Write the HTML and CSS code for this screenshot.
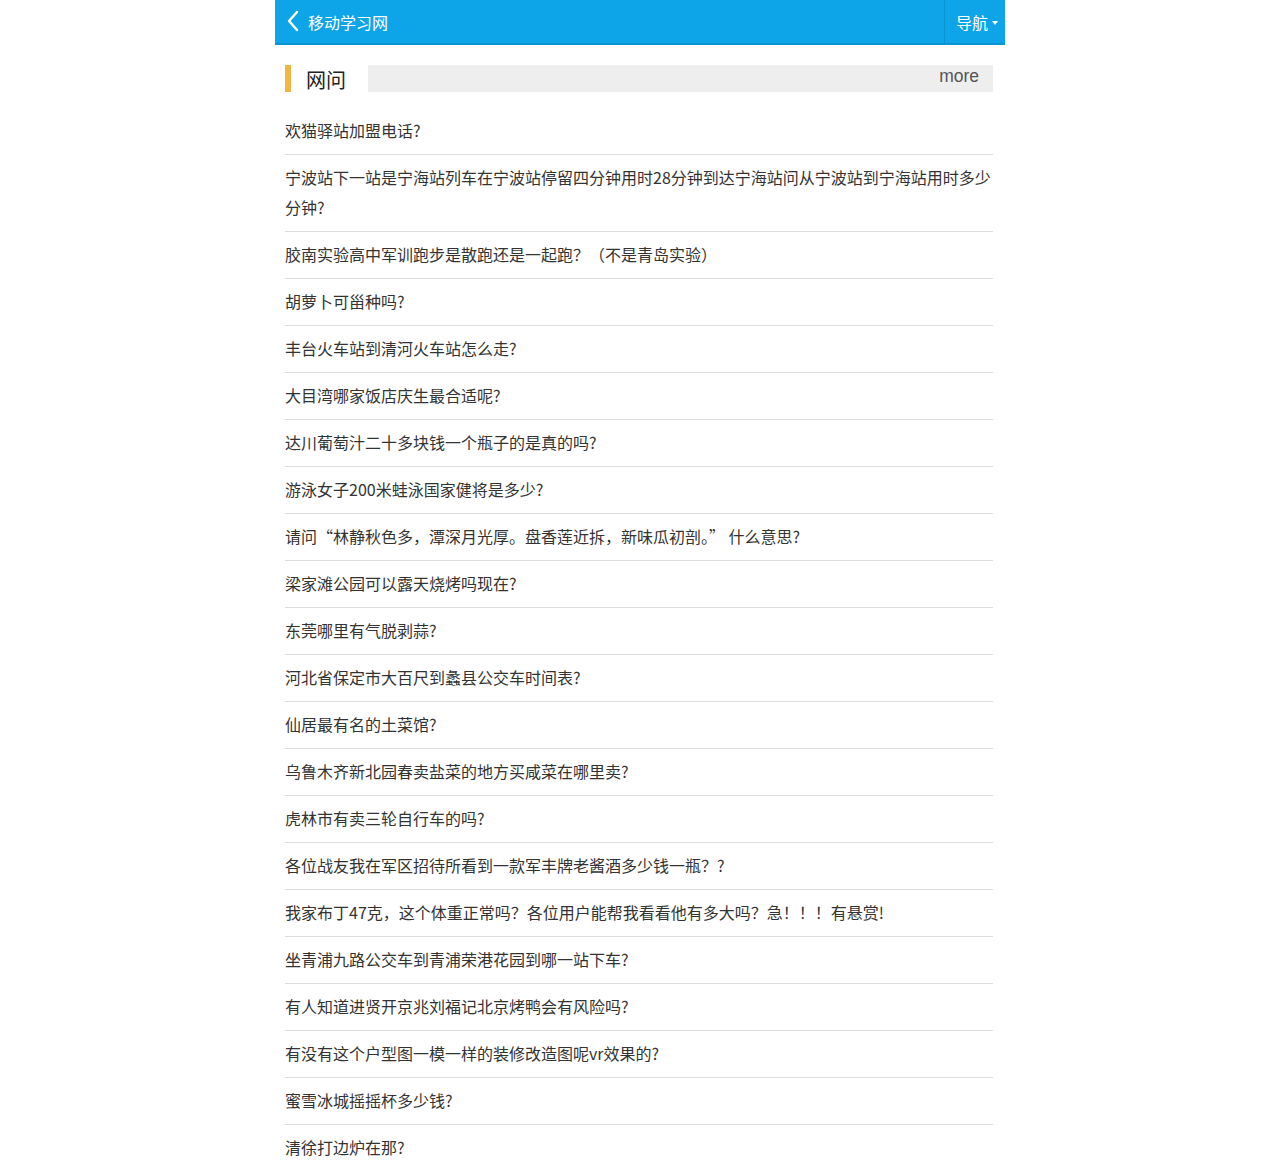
FILE: index.html
```html
<!DOCTYPE html>
<html lang="zh-CN">
<head>
<meta charset="utf-8">
<title>移动学习网</title>
<link rel="stylesheet" href="styles.css">
</head>
<body>
<div class="page">
  <header class="topbar">
    <a class="back" href="#">
      <svg class="back-icon" width="14" height="22" viewBox="0 0 14 22"><path d="M11 2 L3 11 L11 20" fill="none" stroke="#fff" stroke-width="2.4" stroke-linecap="round" stroke-linejoin="round"/></svg>
      <span class="site">移动学习网</span>
    </a>
    <div class="nav">导航<span class="caret"></span></div>
  </header>
  <section class="section">
    <div class="sec-head">
      <span class="sec-mark"></span>
      <h2 class="sec-title">网问</h2>
      <div class="sec-bar"><a class="more" href="#">more</a></div>
    </div>
    <ul class="list">
      <li>欢猫驿站加盟电话?</li>
      <li>宁波站下一站是宁海站列车在宁波站停留四分钟用时28分钟到达宁海站问从宁波站到宁海站用时多少分钟?</li>
      <li>胶南实验高中军训跑步是散跑还是一起跑？（不是青岛实验）</li>
      <li>胡萝卜可甾种吗?</li>
      <li>丰台火车站到清河火车站怎么走?</li>
      <li>大目湾哪家饭店庆生最合适呢?</li>
      <li>达川葡萄汁二十多块钱一个瓶子的是真的吗?</li>
      <li>游泳女子200米蛙泳国家健将是多少?</li>
      <li>请问“林静秋色多，潭深月光厚。盘香莲近拆，新味瓜初剖。” 什么意思?</li>
      <li>梁家滩公园可以露天烧烤吗现在?</li>
      <li>东莞哪里有气脱剥蒜?</li>
      <li>河北省保定市大百尺到蠡县公交车时间表?</li>
      <li>仙居最有名的土菜馆?</li>
      <li>乌鲁木齐新北园春卖盐菜的地方买咸菜在哪里卖?</li>
      <li>虎林市有卖三轮自行车的吗?</li>
      <li>各位战友我在军区招待所看到一款军丰牌老酱酒多少钱一瓶？?</li>
      <li>我家布丁47克，这个体重正常吗？各位用户能帮我看看他有多大吗？急！！！有悬赏!</li>
      <li>坐青浦九路公交车到青浦荣港花园到哪一站下车?</li>
      <li>有人知道进贤开京兆刘福记北京烤鸭会有风险吗?</li>
      <li>有没有这个户型图一模一样的装修改造图呢vr效果的?</li>
      <li>蜜雪冰城摇摇杯多少钱?</li>
      <li>清徐打边炉在那?</li>
    </ul>
  </section>
</div>
</body>
</html>
```

FILE: styles.css
```css
* { box-sizing: border-box; }
html, body { margin: 0; padding: 0; background: #fff; }
body {
  font-family: "Noto Sans CJK SC", "Microsoft YaHei", "Liberation Sans", sans-serif;
  color: #333;
  font-size: 16px;
}
.page {
  width: 730px;
  margin: 0 auto;
}
.topbar {
  height: 45px;
  background: #0ea5e8;
  border-bottom: 2px solid #0b95d4;
  display: flex;
  align-items: stretch;
  justify-content: space-between;
}
.back {
  display: flex;
  align-items: center;
  padding-left: 11px;
  color: #fff;
  text-decoration: none;
}
.back-icon { margin-right: 8px; margin-top: -1px; }
.site { font-size: 16px; line-height: 20px; color: #fff; }
.nav {
  display: flex;
  align-items: center;
  padding: 0 7px 0 11px;
  border-left: 1px solid #0b93d0;
  color: #fff;
  font-size: 16px;
}
.caret {
  display: inline-block;
  width: 0; height: 0;
  margin-left: 4px;
  margin-top: 2px;
  border-left: 3.5px solid transparent;
  border-right: 3.5px solid transparent;
  border-top: 4px solid #fff;
}
.section { padding: 20px 12px 0 10px; }
.sec-head {
  display: flex;
  align-items: stretch;
  height: 27px;
}
.sec-mark {
  width: 6px;
  background: #f1b541;
}
.sec-title {
  margin: 0 22px 0 15px;
  font-size: 20px;
  font-weight: normal;
  line-height: 30px;
  color: #222;
}
.sec-bar {
  flex: 1;
  background: #eeeeee;
  display: flex;
  justify-content: flex-end;
  align-items: flex-start;
  padding-right: 14px;
}
.more {
  color: #555;
  text-decoration: none;
  font-size: 17.5px;
  line-height: 23px;
  font-family: "Liberation Sans", "Noto Sans CJK SC", sans-serif;
}
.list {
  list-style: none;
  margin: 16px 0 0;
  padding: 0;
}
.list li {
  padding: 7px 0 9px;
  line-height: 30px;
  border-bottom: 1px solid #dddddd;
  color: #333;
}
.list li:last-child { border-bottom: none; }
```
